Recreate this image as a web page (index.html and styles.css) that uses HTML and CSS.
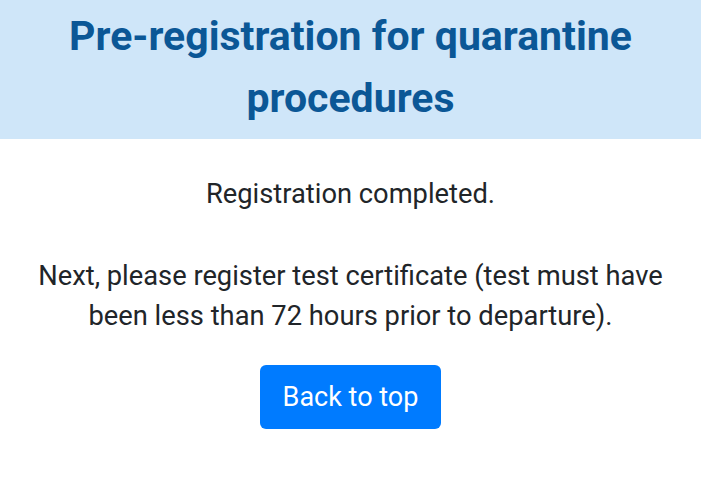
FILE: index.html
```html
<!DOCTYPE html>
<html lang="en">
<head>
<meta charset="utf-8">
<title>Pre-registration for quarantine procedures</title>
<link rel="stylesheet" href="styles.css">
</head>
<body>
<header class="page-header">
  <h1 class="title">Pre-registration for quarantine procedures</h1>
</header>
<main class="content">
  <p class="msg msg-done">Registration completed.</p>
  <p class="msg msg-next">Next, please register test certificate (test must have been less than 72 hours prior to departure).</p>
  <a class="btn" href="#">Back to top</a>
</main>
</body>
</html>
```
FILE: styles.css
```css
html, body {
  margin: 0;
  padding: 0;
  background: #ffffff;
}
body {
  font-family: Roboto, "Liberation Sans", sans-serif;
  color: #212529;
}
.page-header {
  background: #cfe6f9;
  padding: 6px 24px 10px;
}
.title {
  margin: 0;
  font-size: 41px;
  line-height: 61.5px;
  font-weight: 700;
  color: #0b5796;
  text-align: center;
}
.content {
  display: flex;
  flex-direction: column;
  align-items: center;
  padding: 35px 24px 0;
}
.msg {
  margin: 0;
  font-size: 27.3px;
  line-height: 40.5px;
  text-align: center;
}
.msg-next {
  margin-top: 41px;
}
.btn {
  margin-top: 28px;
  display: flex;
  align-items: center;
  justify-content: center;
  width: 181px;
  height: 64px;
  box-sizing: border-box;
  background: #007bff;
  color: #ffffff;
  font-size: 27px;
  text-decoration: none;
  border-radius: 6px;
}
```
